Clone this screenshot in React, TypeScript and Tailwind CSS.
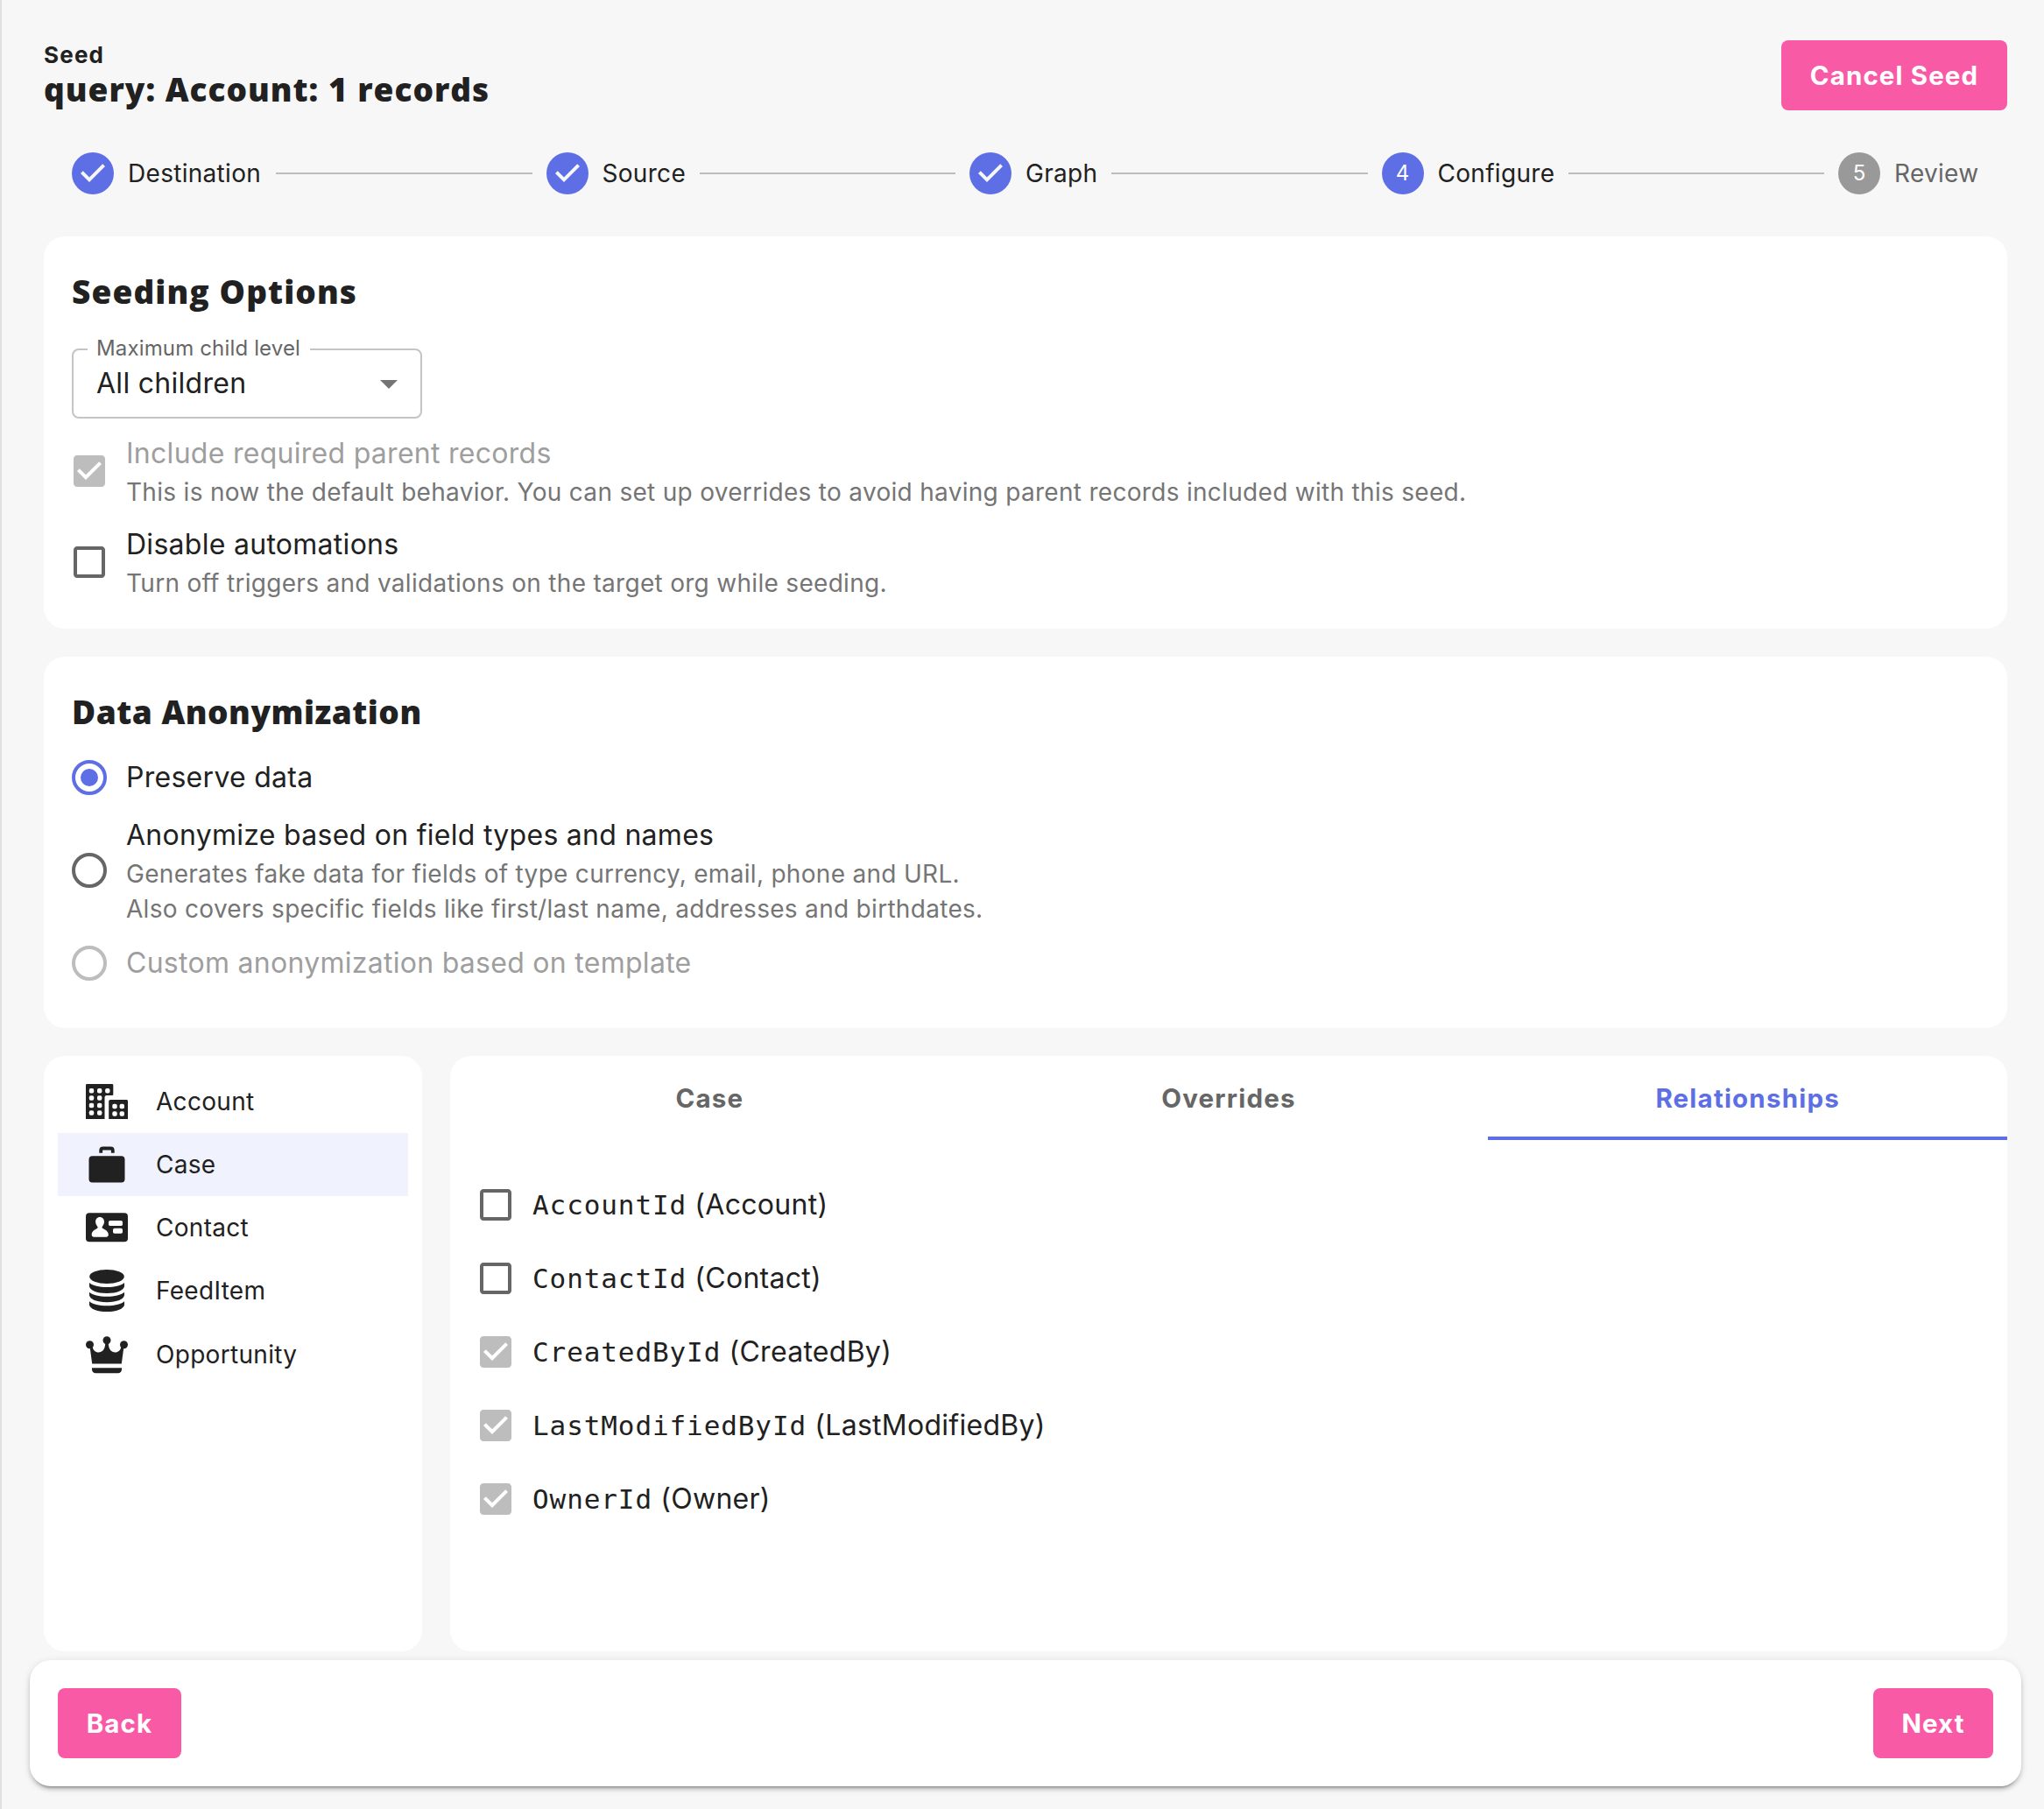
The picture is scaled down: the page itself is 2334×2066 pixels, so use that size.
import { Fragment, type ReactNode } from "react";

const SANS = "font-['Inter',sans-serif]";
const body1 = "text-[32px] leading-[48px] tracking-[0.28px] whitespace-nowrap";
const body2 = "text-[28px] leading-[40px] tracking-[0.3px] whitespace-nowrap";
const heading = "text-[37px] leading-[48px] font-extrabold whitespace-nowrap font-['Open_Sans',sans-serif]";

/* ---------- controls ---------- */

function Checkbox({ checked = false }: { checked?: boolean }) {
  return (
    <svg viewBox="0 0 24 24" className={checked ? "size-12 shrink-0 text-[#bdbdbd]" : "size-12 shrink-0 text-[#666666]"} fill="currentColor">
      {checked ? (
        <path d="M19 3H5c-1.11 0-2 .9-2 2v14c0 1.1.89 2 2 2h14c1.11 0 2-.9 2-2V5c0-1.1-.89-2-2-2zm-9 14l-5-5 1.41-1.41L10 14.17l7.59-7.59L19 8l-9 9z" />
      ) : (
        <path d="M19 5v14H5V5h14m0-2H5c-1.1 0-2 .9-2 2v14c0 1.1.9 2 2 2h14c1.1 0 2-.9 2-2V5c0-1.1-.9-2-2-2z" />
      )}
    </svg>
  );
}

function Radio({ state }: { state: "on" | "off" | "disabled" }) {
  const color = state === "on" ? "text-[#5e6fe6]" : state === "off" ? "text-[#666666]" : "text-[#bdbdbd]";
  return (
    <svg viewBox="0 0 48 48" className={`size-12 shrink-0 ${color}`}>
      <circle cx="24" cy="24" r="18" fill="none" stroke="currentColor" strokeWidth="4" />
      {state === "on" && <circle cx="24" cy="24" r="10" fill="currentColor" />}
    </svg>
  );
}

function Button({ label, className }: { label: string; className: string }) {
  return (
    <button className={`flex h-20 items-center justify-center rounded-lg bg-[#f95aa6] text-[29.5px] font-bold tracking-[1.1px] text-white ${className}`}>
      {label}
    </button>
  );
}

function Option({ control, label, muted, children }: { control: ReactNode; label: string; muted?: boolean; children?: ReactNode }) {
  return (
    <div className="-ml-1 flex items-center gap-[18px]">
      {control}
      <div>
        <div className={`${body1} ${muted ? "text-[#9e9e9e]" : "text-[#212121]"}`}>{label}</div>
        {children && <div className={`${body2} text-[#757575]`}>{children}</div>}
      </div>
    </div>
  );
}

/* ---------- stepper ---------- */

const steps = [
  { label: "Destination", state: "done", width: "w-[153px]" },
  { label: "Source", state: "done", width: "w-[95px]" },
  { label: "Graph", state: "done", width: "w-[82px]" },
  { label: "Configure", state: "active", width: "w-[133px]" },
  { label: "Review", state: "todo", width: "w-[97px]" },
];

function StepBadge({ n, state }: { n: number; state: string }) {
  if (state === "done") {
    return (
      <svg viewBox="0 0 24 24" className="size-12 shrink-0 text-[#5e6fe6]" fill="currentColor">
        <circle cx="12" cy="12" r="12" />
        <path fill="#f7f7f7" d="M10 17l-5-5 1.4-1.4 3.6 3.6 7.6-7.6L19 8z" />
      </svg>
    );
  }
  return (
    <div className={`flex size-12 shrink-0 items-center justify-center rounded-full text-2xl text-white ${state === "active" ? "bg-[#5e6fe6]" : "bg-[#999999]"}`}>
      {n}
    </div>
  );
}

function Stepper() {
  return (
    <div className="mt-12 flex h-12 items-center px-8">
      {steps.map((s, i) => (
        <Fragment key={s.label}>
          {i > 0 && <div className="mx-4 h-0.5 flex-1 bg-[#bdbdbd]" />}
          <StepBadge n={i + 1} state={s.state} />
          <div className={`ml-4 ${s.width} ${body2} ${s.state === "todo" ? "text-[#666666]" : "text-[#212121]"}`}>{s.label}</div>
        </Fragment>
      ))}
    </div>
  );
}

/* ---------- object list ---------- */

const grid = (xs: number[], ys: number[], s: number) =>
  ys.flatMap((y) => xs.map((x) => <rect key={`${x}-${y}`} x={x - s / 2} y={y - s / 2} width={s} height={s} rx="1.9" fill="#fff" />));

const icons: Record<string, ReactNode> = {
  Account: (
    <>
      <path d="M0 44V5.3C0 4.6.6 4 1.3 4H30c.7 0 1.3.6 1.3 1.3v10.400c0 .9-.6 1.400-1.300 1.400h-6.300c-1.400 0-2.200 1-2.200 2.300V44z" />
      <path d="M26.2 44V24c0-1.2.8-2 2-2h18.2c1 0 1.6.7 1.6 1.6V44z" />
      {grid([6.5, 15.7], [11.7, 20, 28.5, 37], 5.4)}
      {grid([24.8], [11.7], 5.4)}
      {grid([33, 41.3], [29.5, 38], 5.4)}
    </>
  ),
  Case: (
    <>
      <rect x="3.5" y="14.2" width="41" height="30.2" rx="4" />
      <path d="M17.2 10.700V8c0-1.500 1-2.500 2.500-2.500h8.600c1.500 0 2.500 1 2.500 2.500v2.700" fill="none" stroke="currentColor" strokeWidth="3.800" />
    </>
  ),
  Contact: (
    <>
      <rect x="0" y="7.2" width="48" height="33" rx="4" />
      <path
        fill="#fff"
        d="M16 12c3 0 5 2.300 5 5.200 0 2.200-.8 3.700-2 5.200-.7 1-.6 2 .4 2.600 2.600 1.400 6.400 3.200 6.400 6.900 0 1.800-1 2.800-2.600 2.800H9.300c-1.600 0-2.600-1-2.600-2.800 0-3.700 3.600-5.500 6.100-6.900 1-.6 1-1.600.3-2.600-1.200-1.500-2-3-2-5.200C11.100 14.300 13 12 16 12z"
      />
      <rect x="26" y="16" width="16" height="6" rx="1.800" fill="#fff" />
      <rect x="31" y="24.700" width="11" height="6" rx="1.800" fill="#fff" />
    </>
  ),
  FeedItem: (
    <>
      <ellipse cx="24" cy="8" rx="19.800" ry="8" />
      <path d="M4 15c4 3.500 11 5 20 5s16-1.500 20-5v4c-1 4.500-8 8-20 8S5 23.500 4 19z" />
      <path d="M4 25.700c4 3.500 11 5 20 5s16-1.500 20-5v3.600c-1 4.500-8 7.900-20 7.900S5 33.800 4 29.300z" />
      <path d="M4 36.300c4 3.500 11 5 20 5s16-1.500 20-5v3.900C43 44.700 36 48 24 48S5 44.700 4 40.200z" />
    </>
  ),
  Opportunity: (
    <>
      <circle cx="4.500" cy="12.800" r="4.500" />
      <circle cx="24" cy="7.700" r="4.500" />
      <circle cx="43.500" cy="12.800" r="4.500" />
      <path d="M4.700 16l2.500 18.500h33.600L43.300 16l-3.100-.5c-.5 3.500-3.200 6-6.700 6-4.300 0-7.500-3.500-7.700-10h-3.600c-.2 6.500-3.400 10-7.700 10-3.500 0-6.200-2.500-6.700-6z" />
      <path d="M7 39.300h34v1.500c0 2.800-1.700 4.500-4.400 4.500H11.400C8.700 45.300 7 43.600 7 40.800z" />
    </>
  ),
};

const objects = [
  { name: "Account", row: "h-[72px]" },
  { name: "Case", row: "h-[72px] bg-[#f0f3fe]" },
  { name: "Contact", row: "h-[72px]" },
  { name: "FeedItem", row: "h-[72.5px]" },
  { name: "Opportunity", row: "h-[72.5px]" },
];

function ObjectList() {
  return (
    <nav className="w-[432px] rounded-3xl bg-white px-4 pt-4">
      {objects.map(({ name, row }) => (
        <div key={name} className={`flex items-center gap-8 px-8 ${row}`}>
          <svg viewBox="0 0 48 48" className="size-12 shrink-0 text-[#212121]" fill="currentColor">{icons[name]}</svg>
          <span className={body2}>{name}</span>
        </div>
      ))}
    </nav>
  );
}

/* ---------- relationships ---------- */

const relationships = [
  { field: "AccountId", target: "Account", checked: false },
  { field: "ContactId", target: "Contact", checked: false },
  { field: "CreatedById", target: "CreatedBy", checked: true },
  { field: "LastModifiedById", target: "LastModifiedBy", checked: true },
  { field: "OwnerId", target: "Owner", checked: true },
];

function RelationshipsPanel() {
  return (
    <section className="flex-1 rounded-3xl bg-white">
      <div className="grid h-24 grid-cols-3 text-[29.5px] font-bold tracking-[1.2px] text-[#666666]">
        <div className="flex items-center justify-center">Case</div>
        <div className="flex items-center justify-center">Overrides</div>
        <div className="flex items-center justify-center border-b-4 border-[#5e6fe6] pt-1 text-[#5e6fe6]">Relationships</div>
      </div>
      <div className="pt-8 pl-7">
        {relationships.map((r) => (
          <div key={r.field} className="flex h-[84px] items-center gap-[18px]">
            <Checkbox checked={r.checked} />
            <div className={body1}>
              <span className="font-['DejaVu_Sans_Mono',monospace] text-[31px] tracking-[0.9px]">{r.field}</span> ({r.target})
            </div>
          </div>
        ))}
      </div>
    </section>
  );
}

export default function App() {
  return (
    <div className={`flex h-[2066px] w-[2334px] flex-col overflow-hidden border-l-2 border-[#e0e0e0] bg-[#f7f7f7] pr-[42px] pl-12 text-[#212121] ${SANS}`}>
      <header className="mt-[46px] flex h-20 justify-between">
        <div>
          <div className="text-[26px] leading-[33px] font-bold tracking-[1.2px]">Seed</div>
          <h1 className={`${heading} -mt-px tracking-[1px]`}>query: Account: 1 records</h1>
        </div>
        <Button label="Cancel Seed" className="w-[258px]" />
      </header>

      <Stepper />

      <section className="mt-12 h-[448px] rounded-3xl bg-white px-8 pt-[39px]">
        <h2 className={`${heading} tracking-[1.1px]`}>Seeding Options</h2>
        <div className="relative mt-[41px] flex h-20 w-[400px] items-center justify-between rounded-lg border-2 border-[#c4c4c4] pr-3 pl-[26px]">
          <span className="absolute -top-[17px] left-4 bg-white pr-[11px] pl-[10px] text-2xl leading-[30px] tracking-[0.15px] whitespace-nowrap text-[#666666]">Maximum child level</span>
          <span className={body1}>All children</span>
          <svg viewBox="0 0 24 24" className="size-12 text-[#757575]" fill="currentColor">
            <path d="M7 10l5 5 5-5z" />
          </svg>
        </div>
        <div className="mt-4 flex flex-col gap-4">
          <Option control={<Checkbox checked />} label="Include required parent records" muted>
            This is now the default behavior. You can set up overrides to avoid having parent records included with this seed.
          </Option>
          <Option control={<Checkbox />} label="Disable automations">
            Turn off triggers and validations on the target org while seeding.
          </Option>
        </div>
      </section>

      <section className="mt-8 h-[424px] rounded-3xl bg-white px-8 pt-[39px]">
        <h2 className={`${heading} tracking-[0.5px]`}>Data Anonymization</h2>
        <div className="mt-[27px] flex flex-col gap-[18px]">
          <Option control={<Radio state="on" />} label="Preserve data" />
          <Option control={<Radio state="off" />} label="Anonymize based on field types and names">
            Generates fake data for fields of type currency, email, phone and URL.
            <br />
            Also covers specific fields like first/last name, addresses and birthdates.
          </Option>
          <Option control={<Radio state="disabled" />} label="Custom anonymization based on template" muted />
        </div>
      </section>

      <div className="mt-8 flex h-[680px] gap-8">
        <ObjectList />
        <RelationshipsPanel />
      </div>

      <footer className="mt-[10px] -mr-4 -ml-4 flex h-36 items-center justify-between rounded-3xl bg-white px-8 shadow-[0_6px_2px_-4px_rgba(0,0,0,0.2),0_4px_4px_0_rgba(0,0,0,0.14),0_2px_10px_0_rgba(0,0,0,0.12)]">
        <Button label="Back" className="w-[141px]" />
        <Button label="Next" className="w-[137px]" />
      </footer>
    </div>
  );
}
